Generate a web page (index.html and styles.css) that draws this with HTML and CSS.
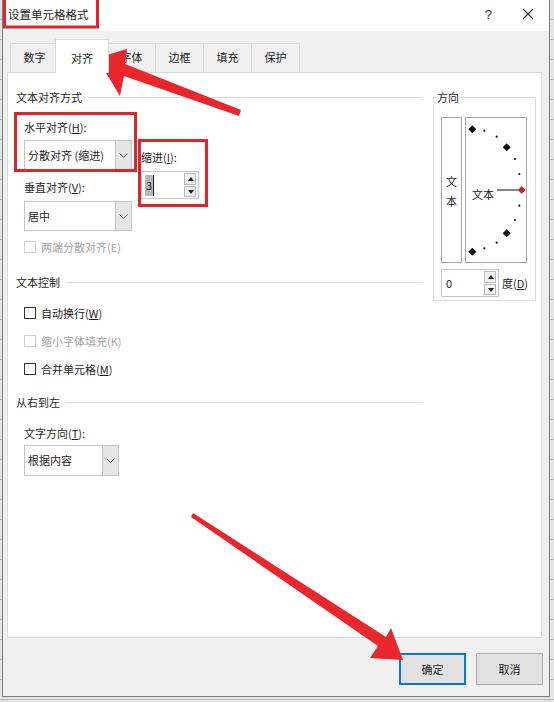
FILE: index.html
```html
<!DOCTYPE html>
<html lang="zh-CN">
<head>
    <meta charset="UTF-8">
    <meta name="viewport" content="width=device-width, initial-scale=1.0">
    <title>设置单元格格式</title>
    <link rel="stylesheet" href="styles.css">
</head>
<body>
    <div class="dialog">
        <div class="titlebar">
            <span class="title">设置单元格格式</span>
            <span class="help">?</span>
            <svg class="close" width="12" height="12" viewBox="0 0 12 12"><path d="M1 1L11 11M11 1L1 11" stroke="#333" stroke-width="1.1"/></svg>
        </div>

        <div class="tabs">
            <div class="tab">数字</div>
            <div class="tab active">对齐</div>
            <div class="tab">字体</div>
            <div class="tab">边框</div>
            <div class="tab">填充</div>
            <div class="tab">保护</div>
        </div>

        <div class="panel">
            <div class="left-col">
                <div class="section-head"><span>文本对齐方式</span><i></i></div>
                <div class="align-row">
                    <div class="field-col">
                        <div class="label">水平对齐(<u>H</u>):</div>
                        <div class="select first">
                            <span class="select-text">分散对齐 (缩进)</span>
                            <span class="select-btn"><svg width="9" height="5" viewBox="0 0 9 5"><path d="M0.5 0.5L4.5 4.5L8.5 0.5" fill="none" stroke="#555"/></svg></span>
                        </div>
                        <div class="label second">垂直对齐(<u>V</u>):</div>
                        <div class="select first-v">
                            <span class="select-text">居中</span>
                            <span class="select-btn"><svg width="9" height="5" viewBox="0 0 9 5"><path d="M0.5 0.5L4.5 4.5L8.5 0.5" fill="none" stroke="#555"/></svg></span>
                        </div>
                    </div>
                    <div class="indent-col">
                        <div class="label">缩进(<u>I</u>):</div>
                        <div class="spin indent-spin">
                            <span class="spin-value"><b class="sel">3</b></span>
                            <span class="spin-btns">
                                <span class="up"></span>
                                <span class="down"></span>
                            </span>
                        </div>
                    </div>
                </div>
                <div class="check-row disabled first-check"><span class="box"></span>两端分散对齐(E)</div>

                <div class="section-head text-ctrl"><span>文本控制</span><i></i></div>
                <div class="check-row wrap-row"><span class="box"></span>自动换行(<u>W</u>)</div>
                <div class="check-row disabled"><span class="box"></span>缩小字体填充(K)</div>
                <div class="check-row"><span class="box"></span>合并单元格(<u>M</u>)</div>

                <div class="section-head rtl"><span>从右到左</span><i></i></div>
                <div class="label dir-label">文字方向(<u>T</u>):</div>
                <div class="select dir-select">
                    <span class="select-text">根据内容</span>
                    <span class="select-btn"><svg width="9" height="5" viewBox="0 0 9 5"><path d="M0.5 0.5L4.5 4.5L8.5 0.5" fill="none" stroke="#555"/></svg></span>
                </div>
            </div>

            <fieldset class="orient">
                <legend>方向</legend>
                <div class="orient-boxes">
                    <div class="vtext">文<br>本</div>
                    <div class="dial">
                        <svg width="60" height="144" viewBox="0 0 60 144">
                            <g fill="#111">
                                <path d="M6.3 7.3L10.3 11.3L6.3 15.3L2.3 11.3Z"/>
                                <circle cx="18.3" cy="12.7" r="1.1"/>
                                <circle cx="30.7" cy="18.7" r="1.1"/>
                                <path d="M40.7 25.3L44.7 29.3L40.7 33.3L36.7 29.3Z"/>
                                <circle cx="49" cy="41" r="1.1"/>
                                <circle cx="53.3" cy="56" r="1.1"/>
                                <circle cx="53.3" cy="87.7" r="1.1"/>
                                <circle cx="49" cy="102" r="1.1"/>
                                <path d="M40.7 111.3L44.7 115.3L40.7 119.3L36.7 115.3Z"/>
                                <circle cx="30.7" cy="124.7" r="1.1"/>
                                <circle cx="18.3" cy="130.3" r="1.1"/>
                                <path d="M6.3 129.7L10.3 133.7L6.3 137.7L2.3 133.7Z"/>
                            </g>
                            <line x1="31" y1="72" x2="53" y2="72" stroke="#111" stroke-width="1"/>
                            <path d="M55.7 68L59.5 72L55.7 76L51.9 72Z" fill="#c0262b"/>
                            <text x="6" y="81" font-size="11" fill="#222">文本</text>
                        </svg>
                    </div>
                </div>
                <div class="deg-row">
                    <div class="spin deg-spin">
                        <span class="spin-value">0</span>
                        <span class="spin-btns">
                            <span class="up"></span>
                            <span class="down"></span>
                        </span>
                    </div>
                    <span class="deg-label">度(<u>D</u>)</span>
                </div>
            </fieldset>
        </div>

        <div class="footer">
            <button class="btn ok">确定</button>
            <button class="btn">取消</button>
        </div>
    </div>

    <!-- annotations drawn over the screenshot -->
    <svg class="marks" width="554" height="702" viewBox="0 0 554 702">
        <g fill="none" stroke="#e3222a" stroke-width="3">
            <rect x="4.5" y="-2" width="93" height="29"/>
            <rect x="15.5" y="113.5" width="120" height="57"/>
            <rect x="139.5" y="140.5" width="67" height="65"/>
        </g>
        <g fill="#e8262b">
            <path d="M97 58L127 49L125 64L241 110L239 116L124 76L120 96Z"/>
            <path d="M193 513L386 637L391 628L403 660L370 658L378 646L191 517Z"/>
        </g>
    </svg>
</body>
</html>
```

FILE: styles.css
```css
body {
    margin: 0;
    width: 554px;
    height: 702px;
    overflow: hidden;
    position: relative;
    font-family: "Noto Sans CJK SC", "Noto Sans", sans-serif;
    font-size: 11px;
    color: #1e1e1e;
    background-color: #e4e4e4;
    background-image: repeating-linear-gradient(180deg, transparent 0, transparent 19px, #b9b9b9 19px, #b9b9b9 20px);
}
u {
    text-decoration: underline;
    text-underline-offset: 1px;
}

.dialog {
    margin-left: 2px;
    width: 548px;
    height: 697px;
    box-sizing: border-box;
    background: #f0f0f0;
    border: 1px solid #7d7d7d;
    border-top: none;
    display: flex;
    flex-direction: column;
}

/* title bar */
.titlebar {
    height: 31px;
    background: #fff;
    display: flex;
    align-items: center;
    padding-left: 5px;
}
.title {
    font-size: 11.5px;
    line-height: 14px;
    margin-top: -3px;
}
.help {
    margin-left: auto;
    font-family: "Liberation Sans", sans-serif;
    font-size: 13px;
    margin-top: -3px;
    color: #333;
}
.close {
    margin-left: 30px;
    margin-right: 15px;
    margin-top: -3px;
}

/* tabs */
.tabs {
    height: 41px;
    display: flex;
    align-items: flex-end;
    padding-left: 7px;
}
.tab {
    height: 28px;
    line-height: 27px;
    width: 47px;
    text-align: center;
    border: 1px solid #d9d9d9;
    border-bottom: none;
    margin-right: -1px;
    background: #f0f0f0;
}
.tab.active {
    height: 33px;
    width: 52px;
    line-height: 36px;
    background: #fff;
    margin: 0 -2px -1px -3px;
    position: relative;
    z-index: 1;
}

/* main white panel */
.panel {
    margin: 0 7px 0 4px;
    height: 566px;
    box-sizing: border-box;
    background: #fff;
    border: 1px solid #d9d9d9;
    padding: 17px 0 0 8px;
    display: flex;
    gap: 10px;
}
.left-col {
    width: 407px;
}
.section-head {
    display: flex;
    align-items: center;
    height: 14px;
    line-height: 14px;
}
.section-head i {
    flex: 1;
    border-top: 1px solid #dcdcdc;
    margin-left: 6px;
}
.label {
    line-height: 14px;
    height: 14px;
}

.align-row {
    display: flex;
    margin-top: 16px;
    padding-left: 8px;
}
.field-col {
    width: 108px;
}
.select {
    display: flex;
    height: 30px;
    box-sizing: border-box;
    border: 1px solid #c4c4c4;
    background: #fff;
}
.select.first {
    margin-top: 6px;
}
.label.second {
    margin-top: 10px;
}
.select.first-v {
    margin-top: 7px;
}
.select-text {
    flex: 1;
    padding-left: 3px;
    line-height: 28px;
    white-space: nowrap;
}
.select-btn {
    width: 15px;
    background: #e6e6e6;
    border-left: 1px solid #c4c4c4;
    display: flex;
    align-items: center;
    justify-content: center;
}

.indent-col {
    margin-left: 9px;
    padding-top: 30px;
}
.spin {
    display: flex;
    width: 58px;
    height: 28px;
    box-sizing: border-box;
    border: 1px solid #c4c4c4;
    background: #fff;
}
.indent-spin {
    margin-top: 7px;
}
.spin-value {
    flex: 1;
    padding-left: 3px;
    line-height: 26px;
}
.sel {
    font-weight: normal;
    background: #b8b8b8;
    padding: 2px 1px 3px 1px;
    border-right: 1px solid #222;
}
.spin-btns {
    width: 12px;
    margin: 1px 2px 1px 0;
    display: flex;
    flex-direction: column;
    gap: 1px;
}
.spin-btns span {
    flex: 1;
    background: #f0f0f0;
    border: 1px solid #b9b9b9;
    position: relative;
}
.spin-btns .up::after,
.spin-btns .down::after {
    content: "";
    position: absolute;
    left: 3px;
    top: 3px;
    border-left: 3px solid transparent;
    border-right: 3px solid transparent;
}
.spin-btns .up::after {
    border-bottom: 4px solid #222;
}
.spin-btns .down::after {
    border-top: 4px solid #222;
}

.check-row {
    display: flex;
    align-items: center;
    height: 14px;
    line-height: 14px;
    padding-left: 8px;
    margin-top: 14px;
}
.check-row .box {
    width: 12px;
    height: 12px;
    box-sizing: border-box;
    border: 1px solid #333;
    margin-right: 5px;
    background: #fff;
}
.check-row.disabled {
    color: #a3a3a3;
}
.check-row.disabled .box {
    border-color: #cfcfcf;
}
.check-row.first-check {
    margin-top: 9px;
}
.section-head.text-ctrl {
    margin-top: 21px;
}
.check-row.wrap-row {
    margin-top: 17px;
}
.section-head.rtl {
    margin-top: 19px;
}
.dir-label {
    margin-top: 17px;
    padding-left: 8px;
}
.dir-select {
    margin: 5px 0 0 8px;
    width: 95px;
    height: 31px;
}

/* orientation box */
.orient {
    margin: 0;
    width: 103px;
    height: 211px;
    box-sizing: border-box;
    border: 1px solid #dcdcdc;
    padding: 0 0 0 3px;
}
.orient legend {
    padding: 0;
    line-height: 14px;
}
.orient-boxes {
    display: flex;
    gap: 3px;
    margin: 13px 0 0 4px;
}
.vtext {
    width: 21px;
    height: 146px;
    box-sizing: border-box;
    border: 1px solid #a6a6a6;
    display: flex;
    align-items: center;
    justify-content: center;
    text-align: center;
    line-height: 20px;
    padding-top: 2px;
}
.dial {
    width: 62px;
    height: 146px;
    box-sizing: border-box;
    border: 1px solid #a6a6a6;
}
.dial svg {
    display: block;
}
.deg-row {
    display: flex;
    align-items: center;
    margin: 6px 0 0 4px;
}
.deg-spin .spin-value {
    padding-left: 4px;
}
.deg-label {
    margin-left: 3px;
}

/* footer buttons */
.footer {
    display: flex;
    justify-content: flex-end;
    gap: 10px;
    padding: 15px 6px 0 0;
}
.btn {
    width: 67px;
    height: 32px;
    font-family: "Noto Sans CJK SC", sans-serif;
    font-size: 11px;
    color: #1e1e1e;
    background: #e1e1e1;
    border: 1px solid #adadad;
    padding: 0;
}
.btn.ok {
    border: 2px solid #0a78d4;
}

.marks {
    position: absolute;
    left: 0;
    top: 0;
    pointer-events: none;
}
```
